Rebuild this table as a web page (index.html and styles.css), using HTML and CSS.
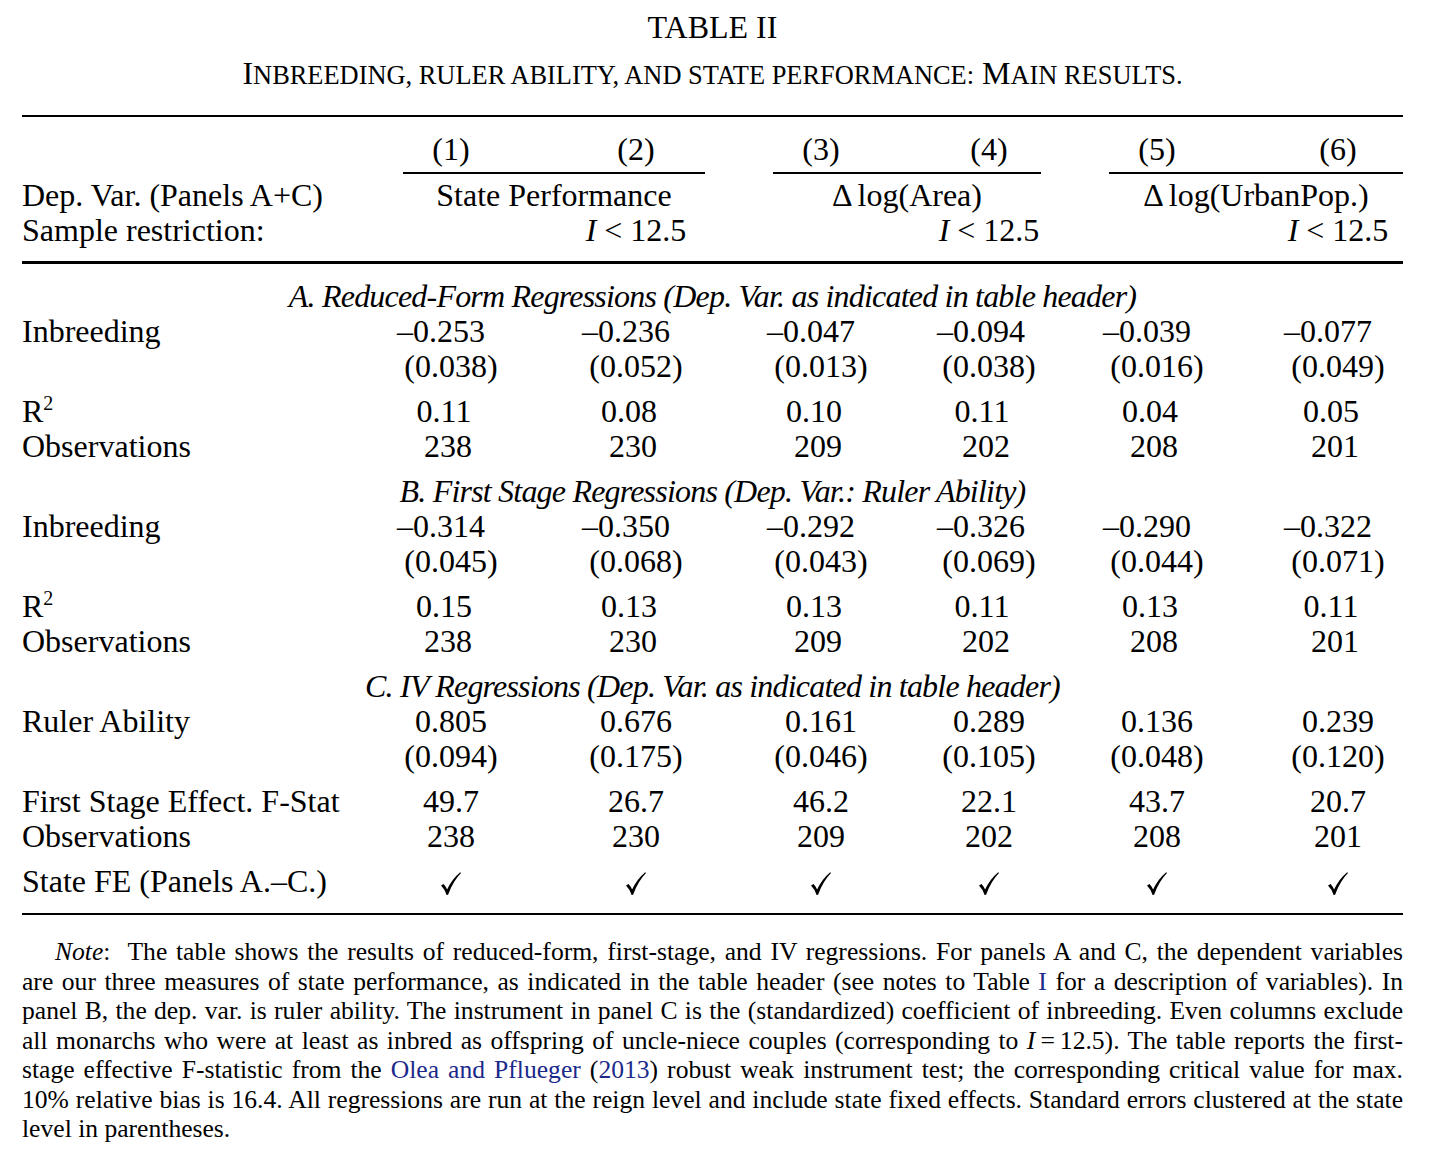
FILE: index.html
```html
<!DOCTYPE html>
<html lang="en">
<head>
<meta charset="utf-8">
<title>Table II</title>
<link rel="stylesheet" href="styles.css">
</head>
<body>
<div class="page">
  <div class="caption">
    <div class="title">TABLE II</div>
    <div class="subtitle">I<span class="sc">nbreeding, ruler ability, and state performance:</span> M<span class="sc">ain results.</span></div>
  </div>

  <div class="table">
    <div class="rule rule-top"></div>

    <div class="row colnums">
      <span class="lbl"></span><span>(1)</span><span>(2)</span><span>(3)</span><span>(4)</span><span>(5)</span><span>(6)</span>
    </div>
    <div class="row cmid">
      <span class="lbl"></span><span class="grp"></span><span class="grp"></span><span class="grp"></span>
    </div>
    <div class="row">
      <span class="lbl">Dep. Var. (Panels A+C)</span>
      <span class="grp">State Performance</span>
      <span class="grp">&Delta;<span class="thin"></span>log(Area)</span>
      <span class="grp">&Delta;<span class="thin"></span>log(UrbanPop.)</span>
    </div>
    <div class="row">
      <span class="lbl">Sample restriction:</span>
      <span></span><span><i>I</i><span class="rel">&lt;</span>12.5</span>
      <span></span><span><i>I</i><span class="rel">&lt;</span>12.5</span>
      <span></span><span><i>I</i><span class="rel">&lt;</span>12.5</span>
    </div>

    <div class="rule rule-mid"></div>

    <div class="panel first">A. Reduced-Form Regressions (Dep. Var. as indicated in table header)</div>
    <div class="row coef">
      <span class="lbl">Inbreeding</span>
      <span>&ndash;0.253</span><span>&ndash;0.236</span><span>&ndash;0.047</span><span>&ndash;0.094</span><span>&ndash;0.039</span><span>&ndash;0.077</span>
    </div>
    <div class="row">
      <span class="lbl"></span>
      <span>(0.038)</span><span>(0.052)</span><span>(0.013)</span><span>(0.038)</span><span>(0.016)</span><span>(0.049)</span>
    </div>
    <div class="row r2 gap">
      <span class="lbl">R<sup>2</sup></span>
      <span>0.11</span><span>0.08</span><span>0.10</span><span>0.11</span><span>0.04</span><span>0.05</span>
    </div>
    <div class="row obs">
      <span class="lbl">Observations</span>
      <span>238</span><span>230</span><span>209</span><span>202</span><span>208</span><span>201</span>
    </div>

    <div class="panel">B. First Stage Regressions (Dep. Var.: Ruler Ability)</div>
    <div class="row coef">
      <span class="lbl">Inbreeding</span>
      <span>&ndash;0.314</span><span>&ndash;0.350</span><span>&ndash;0.292</span><span>&ndash;0.326</span><span>&ndash;0.290</span><span>&ndash;0.322</span>
    </div>
    <div class="row">
      <span class="lbl"></span>
      <span>(0.045)</span><span>(0.068)</span><span>(0.043)</span><span>(0.069)</span><span>(0.044)</span><span>(0.071)</span>
    </div>
    <div class="row r2 gap">
      <span class="lbl">R<sup>2</sup></span>
      <span>0.15</span><span>0.13</span><span>0.13</span><span>0.11</span><span>0.13</span><span>0.11</span>
    </div>
    <div class="row obs">
      <span class="lbl">Observations</span>
      <span>238</span><span>230</span><span>209</span><span>202</span><span>208</span><span>201</span>
    </div>

    <div class="panel">C. IV Regressions (Dep. Var. as indicated in table header)</div>
    <div class="row">
      <span class="lbl">Ruler Ability</span>
      <span>0.805</span><span>0.676</span><span>0.161</span><span>0.289</span><span>0.136</span><span>0.239</span>
    </div>
    <div class="row">
      <span class="lbl"></span>
      <span>(0.094)</span><span>(0.175)</span><span>(0.046)</span><span>(0.105)</span><span>(0.048)</span><span>(0.120)</span>
    </div>
    <div class="row gap">
      <span class="lbl">First Stage Effect. F-Stat</span>
      <span>49.7</span><span>26.7</span><span>46.2</span><span>22.1</span><span>43.7</span><span>20.7</span>
    </div>
    <div class="row">
      <span class="lbl">Observations</span>
      <span>238</span><span>230</span><span>209</span><span>202</span><span>208</span><span>201</span>
    </div>
    <div class="row gap">
      <span class="lbl">State FE (Panels A.&ndash;C.)</span>
      <span><svg class="check" viewBox="0 0 20 23"><path d="M0 13.5 L2.6 12 Q4.6 14.3 6.1 17.6 Q10.6 7.4 19.2 0.2 L20 1.1 Q12.2 9 7.1 22.7 L5.6 22.9 Q3.6 17 0 13.5 Z"/></svg></span>
      <span><svg class="check" viewBox="0 0 20 23"><path d="M0 13.5 L2.6 12 Q4.6 14.3 6.1 17.6 Q10.6 7.4 19.2 0.2 L20 1.1 Q12.2 9 7.1 22.7 L5.6 22.9 Q3.6 17 0 13.5 Z"/></svg></span>
      <span><svg class="check" viewBox="0 0 20 23"><path d="M0 13.5 L2.6 12 Q4.6 14.3 6.1 17.6 Q10.6 7.4 19.2 0.2 L20 1.1 Q12.2 9 7.1 22.7 L5.6 22.9 Q3.6 17 0 13.5 Z"/></svg></span>
      <span><svg class="check" viewBox="0 0 20 23"><path d="M0 13.5 L2.6 12 Q4.6 14.3 6.1 17.6 Q10.6 7.4 19.2 0.2 L20 1.1 Q12.2 9 7.1 22.7 L5.6 22.9 Q3.6 17 0 13.5 Z"/></svg></span>
      <span><svg class="check" viewBox="0 0 20 23"><path d="M0 13.5 L2.6 12 Q4.6 14.3 6.1 17.6 Q10.6 7.4 19.2 0.2 L20 1.1 Q12.2 9 7.1 22.7 L5.6 22.9 Q3.6 17 0 13.5 Z"/></svg></span>
      <span><svg class="check" viewBox="0 0 20 23"><path d="M0 13.5 L2.6 12 Q4.6 14.3 6.1 17.6 Q10.6 7.4 19.2 0.2 L20 1.1 Q12.2 9 7.1 22.7 L5.6 22.9 Q3.6 17 0 13.5 Z"/></svg></span>
    </div>

    <div class="rule rule-bottom"></div>
  </div>

  <div class="note">
    <span class="ln indent"><i>Note</i>:&nbsp; The table shows the results of reduced-form, first-stage, and IV regressions. For panels A and C, the dependent variables</span>
    <span class="ln">are our three measures of state performance, as indicated in the table header (see notes to Table <a class="ref">I</a> for a description of variables). In</span>
    <span class="ln">panel B, the dep. var. is ruler ability. The instrument in panel C is the (standardized) coefficient of inbreeding. Even columns exclude</span>
    <span class="ln">all monarchs who were at least as inbred as offspring of uncle-niece couples (corresponding to <i>I</i><span class="rel-s">=</span>12.5). The table reports the first-</span>
    <span class="ln">stage effective F-statistic from the <a class="ref">Olea and Pflueger</a> (<a class="ref">2013</a>) robust weak instrument test; the corresponding critical value for max.</span>
    <span class="ln">10% relative bias is 16.4. All regressions are run at the reign level and include state fixed effects. Standard errors clustered at the state</span>
    <span class="ln last">level in parentheses.</span>
  </div>
</div>
</body>
</html>
```

FILE: styles.css
```css
html, body {
  margin: 0;
  padding: 0;
  background: #ffffff;
}

body {
  color: #000000;
  font-family: "Liberation Serif", "Times New Roman", serif;
}

.page {
  width: 1381px;
  margin-left: 22px;
  padding-top: 10px;
}

/* Caption */
.title {
  font-size: 32px;
  line-height: 35px;
  text-align: center;
}

.subtitle {
  margin-top: 11px;
  font-size: 32px;
  line-height: 35px;
  text-align: center;
}

.sc {
  font-size: 26.4px;
  text-transform: uppercase;
}

/* Table */
.table {
  margin-top: 22px;
  font-size: 32px;
}

.rule {
  background: #000;
}

.rule-top {
  height: 2px;
}

.rule-mid {
  height: 3px;
  margin-top: 13px;
}

.rule-bottom {
  height: 2px;
  margin-top: 14px;
}

.row {
  display: grid;
  grid-template-columns: 313px 232px 138px 232px 104px 232px 130px;
  height: 35px;
  line-height: 35px;
}

.row > span {
  text-align: center;
  white-space: nowrap;
}

.row > .lbl {
  text-align: left;
}

.row > .grp {
  grid-column: span 2;
  margin-left: 68px;
}

.colnums {
  margin-top: 15px;
}

.cmid {
  height: 2px;
  margin-top: 5px;
  margin-bottom: 4px;
}

.cmid > .grp {
  background: #000;
  height: 2px;
}

.row.gap {
  margin-top: 10px;
}

.coef > span:not(.lbl) {
  padding-right: 20px;
}

.r2 > span:not(.lbl) {
  padding-right: 14px;
}

.obs > span:not(.lbl) {
  padding-right: 6px;
}

.thin {
  display: inline-block;
  width: 5px;
}

.rel {
  display: inline-block;
  padding: 0 8px;
}

sup {
  font-size: 20px;
  line-height: 0;
  vertical-align: 12px;
}

.panel {
  margin-top: 10px;
  height: 35px;
  line-height: 35px;
  font-style: italic;
  letter-spacing: -0.8px;
  text-align: center;
  white-space: nowrap;
}

.panel.first {
  margin-top: 15px;
}

.check {
  width: 20px;
  height: 23px;
  vertical-align: -3px;
}

.check path {
  fill: #000;
}

/* Note */
.note {
  margin-top: 22px;
  font-size: 25.6px;
  line-height: 29.5px;
}

.ln {
  display: block;
  text-align: justify;
  text-align-last: justify;
}

.ln.indent {
  padding-left: 33px;
}

.ln.last {
  text-align-last: left;
}

.ref {
  color: #1b2a8a;
  text-decoration: none;
}

.rel-s {
  display: inline-block;
  padding: 0 5px;
}
```
